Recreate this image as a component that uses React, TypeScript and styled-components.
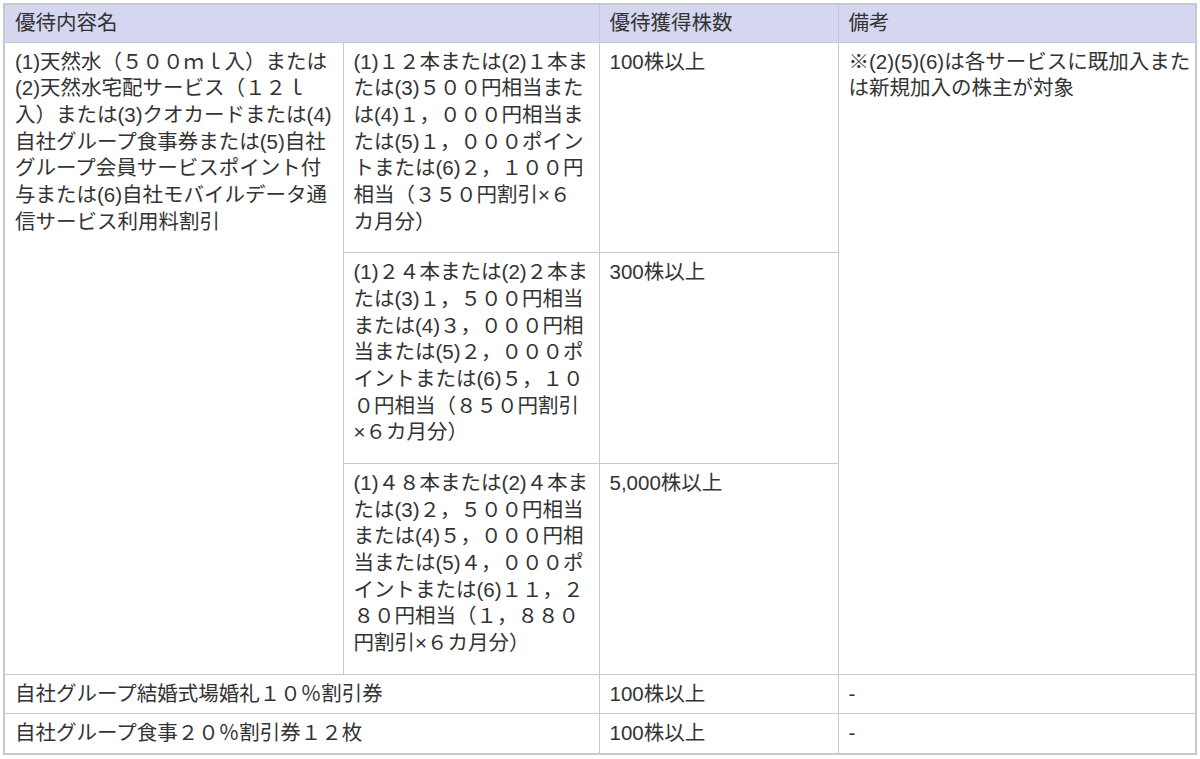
import React from 'react';
import styled, { createGlobalStyle } from 'styled-components';

const GlobalStyle = createGlobalStyle`
  body {
    margin: 0;
    background: #fff;
    font-family: "Liberation Sans", "Noto Sans CJK JP", sans-serif;
    color: #333;
  }
`;

const Page = styled.div`
  padding: 3px 5px 0 3px;
`;

const Table = styled.table`
  width: 1192px;
  border-collapse: collapse;
  table-layout: fixed;
  border: 2px solid #c9c9c9;
  font-size: 20.5px;
  line-height: 26.67px;
`;

const HeadCell = styled.th`
  background: #d4d7ef;
  border: 1px solid #c9c9c9;
  padding: 5px 10px;
  font-weight: normal;
  text-align: left;
  vertical-align: middle;
  white-space: nowrap;
`;

const Cell = styled.td<{ $tall?: boolean }>`
  border: 1px solid #c9c9c9;
  padding: 6px 10px ${(p) => (p.$tall ? '17px' : '6px')} 10px;
  vertical-align: top;
  white-space: nowrap;
  overflow: visible;
`;

const Lines: React.FC<{ lines: string[] }> = ({ lines }) => (
  <>
    {lines.map((l, i) => (
      <React.Fragment key={i}>
        {i > 0 && <br />}
        {l}
      </React.Fragment>
    ))}
  </>
);

const itemName = [
  '(1)天然水（５００ｍｌ入）または',
  '(2)天然水宅配サービス（１２ｌ',
  '入）または(3)クオカードまたは(4)',
  '自社グループ食事券または(5)自社',
  'グループ会員サービスポイント付',
  '与または(6)自社モバイルデータ通',
  '信サービス利用料割引',
];

const tiers = [
  {
    shares: '100株以上',
    lines: [
      '(1)１２本または(2)１本ま',
      'たは(3)５００円相当また',
      'は(4)１，０００円相当ま',
      'たは(5)１，０００ポイン',
      'トまたは(6)２，１００円',
      '相当（３５０円割引×６',
      'カ月分）',
    ],
  },
  {
    shares: '300株以上',
    lines: [
      '(1)２４本または(2)２本ま',
      'たは(3)１，５００円相当',
      'または(4)３，０００円相',
      '当または(5)２，０００ポ',
      'イントまたは(6)５，１０',
      '０円相当（８５０円割引',
      '×６カ月分）',
    ],
  },
  {
    shares: '5,000株以上',
    lines: [
      '(1)４８本または(2)４本ま',
      'たは(3)２，５００円相当',
      'または(4)５，０００円相',
      '当または(5)４，０００ポ',
      'イントまたは(6)１１，２',
      '８０円相当（１，８８０',
      '円割引×６カ月分）',
    ],
  },
];

const note = ['※(2)(5)(6)は各サービスに既加入また', 'は新規加入の株主が対象'];

const others = [
  { name: '自社グループ結婚式場婚礼１０％割引券', shares: '100株以上', note: '-' },
  { name: '自社グループ食事２０％割引券１２枚', shares: '100株以上', note: '-' },
];

const App: React.FC = () => (
  <Page>
    <GlobalStyle />
    <Table>
      <colgroup>
        <col style={{ width: 339 }} />
        <col style={{ width: 256 }} />
        <col style={{ width: 239 }} />
        <col style={{ width: 358 }} />
      </colgroup>
      <thead>
        <tr>
          <HeadCell colSpan={2}>優待内容名</HeadCell>
          <HeadCell>優待獲得株数</HeadCell>
          <HeadCell>備考</HeadCell>
        </tr>
      </thead>
      <tbody>
        {tiers.map((t, i) => (
          <tr key={t.shares}>
            {i === 0 && (
              <Cell rowSpan={tiers.length}>
                <Lines lines={itemName} />
              </Cell>
            )}
            <Cell $tall>
              <Lines lines={t.lines} />
            </Cell>
            <Cell>{t.shares}</Cell>
            {i === 0 && (
              <Cell rowSpan={tiers.length}>
                <Lines lines={note} />
              </Cell>
            )}
          </tr>
        ))}
        {others.map((o) => (
          <tr key={o.name}>
            <Cell colSpan={2}>{o.name}</Cell>
            <Cell>{o.shares}</Cell>
            <Cell>{o.note}</Cell>
          </tr>
        ))}
      </tbody>
    </Table>
  </Page>
);

export default App;
